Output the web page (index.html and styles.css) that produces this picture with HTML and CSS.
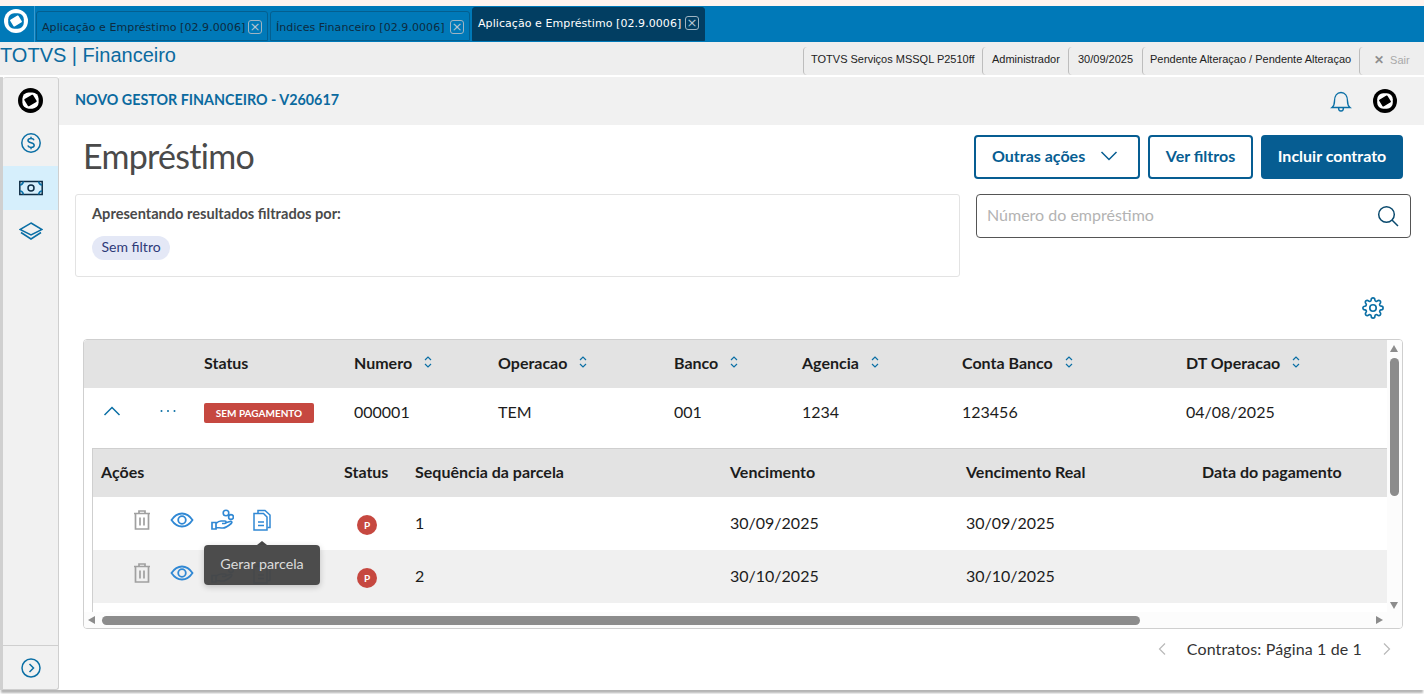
FILE: index.html
```html
<!DOCTYPE html>
<html lang="pt-BR">

<head>
    <meta charset="UTF-8">
    <title>TOTVS | Financeiro</title>
    <link rel="stylesheet" href="styles.css">
</head>

<body>
    <svg class="defs" width="0" height="0">
        <symbol id="totvs" viewBox="0 0 24 24">
            <circle cx="12" cy="12" r="12" fill="currentColor"></circle>
            <rect x="4.200" y="4.200" width="15.600" height="15.600" rx="6" fill="var(--logo-in)"></rect>
            <path d="M6.800 11.300 13.800 7.200l3.400 5.500-7 4.100z" fill="currentColor" stroke="currentColor" stroke-width="1.500" stroke-linejoin="round"></path>
        </symbol>
        <symbol id="sort" viewBox="0 0 10 16">
            <path d="M2 6 5 3l3 3M2 10l3 3 3-3" fill="none" stroke="currentColor" stroke-width="1.200"></path>
        </symbol>
        <symbol id="trash" viewBox="0 0 24 24">
            <path d="M4 5.500h16M9 5.500V3h6v2.500M5.500 5.500V21h13V5.500M10 9.500v8M14 9.500v8" fill="none" stroke="currentColor" stroke-width="1.700"></path>
        </symbol>
        <symbol id="eye" viewBox="0 0 24 24">
            <path d="M1.500 12C4.500 7.500 8 5.500 12 5.500s7.500 2 10.500 6.500c-3 4.500-6.500 6.500-10.500 6.500S4.500 16.500 1.500 12z" fill="none" stroke="currentColor" stroke-width="1.800"></path>
            <circle cx="12" cy="12" r="3.800" fill="none" stroke="currentColor" stroke-width="1.800"></circle>
        </symbol>
        <symbol id="hand" viewBox="0 0 24 24">
            <circle cx="16" cy="5" r="2.800" fill="none" stroke="currentColor" stroke-width="1.600"></circle>
            <circle cx="21" cy="9" r="2.400" fill="none" stroke="currentColor" stroke-width="1.600"></circle>
            <path d="M2 14.500h4v6.500H2zM6 15.500c2-2 3.500-2.500 5-2.500h4c1.500 0 1.500 2.500 0 2.500h-3M15 15l5-1.500c1.800-.4 2.500 1 1.200 2-3 2.500-5.500 4.500-8.200 4.500-2.500 0-5-.5-7-.5" fill="none" stroke="currentColor" stroke-width="1.700"></path>
        </symbol>
        <symbol id="doc" viewBox="0 0 24 24">
            <path d="M8 5.500V2.500h7l5 4.500v12.500h-2.500" fill="none" stroke="currentColor" stroke-width="1.500"></path>
            <path d="M4 5.500h9.500l3.500 3.500v13H4zM8 14h6M8 17.500h6" fill="none" stroke="currentColor" stroke-width="1.500"></path>
        </symbol>
    </svg>

    <div class="strip"></div>

    <div class="tabbar">
        <div class="tab-logo">
            <svg class="logo-white" width="24" height="24"><use href="#totvs"></use></svg>
        </div>
        <div class="tab tab-one"><span>Aplicação e Empréstimo [02.9.0006]</span><b class="tab-x">×</b></div>
        <div class="tab tab-two"><span>Índices Financeiro [02.9.0006]</span><b class="tab-x">×</b></div>
        <div class="tab tab-active"><span>Aplicação e Empréstimo [02.9.0006]</span><b class="tab-x">×</b></div>
    </div>

    <div class="infobar">
        <div class="brand">TOTVS | Financeiro</div>
        <div class="info-items">
            <div class="info info-env">TOTVS Serviços MSSQL P2510ff</div>
            <div class="info info-user">Administrador</div>
            <div class="info info-date">30/09/2025</div>
            <div class="info info-pend">Pendente Alteraçao / Pendente Alteraçao</div>
            <div class="info info-exit"><span class="exit-x">✕</span> Sair</div>
        </div>
    </div>

    <div class="main">
        <aside class="sidebar">
            <div class="side-logo">
                <svg class="logo-black" width="25" height="25"><use href="#totvs"></use></svg>
            </div>
            <div class="side-item side-up">
                <svg width="22" height="22" viewBox="0 0 22 22" fill="none" stroke="currentColor" stroke-width="1.500">
                    <circle cx="11" cy="11" r="9.200"></circle>
                    <path d="M14 8.200c-.4-1.200-1.500-1.700-3-1.700-1.800 0-3 .8-3 2.100 0 2.900 6.200 1.500 6.200 4.700 0 1.300-1.300 2.200-3.200 2.200-1.600 0-2.800-.7-3.200-1.900M11 4.800v1.700M11 15.500v1.700"></path>
                </svg>
            </div>
            <div class="side-item side-active">
                <svg width="24" height="16" viewBox="0 0 24 16" fill="none" stroke="#0e2c44" stroke-width="1.500">
                    <rect x=".8" y="1.500" width="22.400" height="13"></rect>
                    <circle cx="12" cy="8" r="3"></circle>
                    <path d="M1 5c2 0 3-1.500 3.500-3.500M23 5c-2 0-3-1.500-3.500-3.500M1 11c2 0 3 1.500 3.500 3.500M23 11c-2 0-3 1.500-3.500 3.500" stroke="#0b6fa5"></path>
                </svg>
            </div>
            <div class="side-item side-up">
                <svg width="24" height="20" viewBox="0 0 24 20" fill="none" stroke="currentColor" stroke-width="1.500">
                    <path d="M12 2 23 8.500 12 14 1 8.500z"></path>
                    <path d="M2 11.500 12 18l10-6.500"></path>
                </svg>
            </div>
            <div class="side-foot">
                <svg width="20" height="20" viewBox="0 0 20 20" fill="none" stroke="currentColor" stroke-width="1.500">
                    <circle cx="10" cy="10" r="9"></circle>
                    <path d="M8.500 6l4 4-4 4"></path>
                </svg>
            </div>
        </aside>

        <div class="content">
            <div class="app-head">
                <span class="app-name">NOVO GESTOR FINANCEIRO - V260617</span>
                <div class="app-icons">
                    <svg class="bell" width="22" height="24" viewBox="0 0 22 24" fill="none" stroke="currentColor" stroke-width="1.400">
                        <path d="M2 18.500c2-1.500 2.500-3 2.500-6.500 0-5 2.500-8.500 6.500-8.500s6.500 3.500 6.500 8.500c0 3.500.5 5 2.500 6.500zM8.500 18.500c0 2.200 1 3.500 2.500 3.500s2.500-1.300 2.500-3.500"></path>
                    </svg>
                    <svg class="logo-black" width="24" height="24"><use href="#totvs"></use></svg>
                </div>
            </div>

            <div class="page-head">
                <h1 class="page-title">Empréstimo</h1>
                <div class="page-actions">
                    <button class="btn btn-more">Outras ações
                        <svg width="18" height="10" viewBox="0 0 18 10" fill="none" stroke="currentColor" stroke-width="1.500"><path d="M1.500 1 9 8.500 16.500 1"></path></svg>
                    </button>
                    <button class="btn btn-filter">Ver filtros</button>
                    <button class="btn btn-primary">Incluir contrato</button>
                </div>
            </div>

            <div class="filter-row">
                <div class="filter-card">
                    <div class="filter-label">Apresentando resultados filtrados por:</div>
                    <span class="chip">Sem filtro</span>
                </div>
                <div class="search">
                    <span class="search-text">Número do empréstimo</span>
                    <svg width="22" height="22" viewBox="0 0 22 22" fill="none" stroke="currentColor" stroke-width="1.500">
                        <circle cx="9.500" cy="9.500" r="7.800"></circle>
                        <path d="M15 15l6 6"></path>
                    </svg>
                </div>
            </div>

            <div class="gear-row">
                <svg width="22" height="22" viewBox="0 0 24 24" fill="none" stroke="currentColor" stroke-width="1.800" stroke-linejoin="round">
                    <circle cx="12" cy="12" r="3.500"></circle>
                    <path d="M19.400 15a1.650 1.650 0 0 0 .33 1.820l.06.06a2 2 0 0 1 0 2.830 2 2 0 0 1-2.830 0l-.06-.06a1.650 1.650 0 0 0-1.820-.33 1.650 1.650 0 0 0-1 1.510V21a2 2 0 0 1-2 2 2 2 0 0 1-2-2v-.09A1.650 1.650 0 0 0 9 19.400a1.650 1.650 0 0 0-1.820.33l-.06.06a2 2 0 0 1-2.830 0 2 2 0 0 1 0-2.830l.06-.06a1.650 1.650 0 0 0 .33-1.820 1.650 1.650 0 0 0-1.510-1H3a2 2 0 0 1-2-2 2 2 0 0 1 2-2h.09A1.650 1.650 0 0 0 4.600 9a1.650 1.650 0 0 0-.33-1.820l-.06-.06a2 2 0 0 1 0-2.830 2 2 0 0 1 2.830 0l.06.06a1.650 1.650 0 0 0 1.820.33H9a1.650 1.650 0 0 0 1-1.510V3a2 2 0 0 1 2-2 2 2 0 0 1 2 2v.09a1.650 1.650 0 0 0 1 1.510 1.650 1.650 0 0 0 1.820-.33l.06-.06a2 2 0 0 1 2.830 0 2 2 0 0 1 0 2.830l-.06.06a1.650 1.650 0 0 0-.33 1.820V9a1.650 1.650 0 0 0 1.510 1H21a2 2 0 0 1 2 2 2 2 0 0 1-2 2h-.09a1.650 1.650 0 0 0-1.510 1z"></path>
                </svg>
            </div>

            <div class="table-frame">
                <div class="table-view">
                    <div class="grid-outer grid-head">
                        <div></div>
                        <div></div>
                        <div class="cell">Status</div>
                        <div class="cell">Numero <svg class="sort"><use href="#sort"></use></svg></div>
                        <div class="cell">Operacao <svg class="sort"><use href="#sort"></use></svg></div>
                        <div class="cell">Banco <svg class="sort"><use href="#sort"></use></svg></div>
                        <div class="cell">Agencia <svg class="sort"><use href="#sort"></use></svg></div>
                        <div class="cell">Conta Banco <svg class="sort"><use href="#sort"></use></svg></div>
                        <div class="cell">DT Operacao <svg class="sort"><use href="#sort"></use></svg></div>
                    </div>
                    <div class="grid-outer grid-row">
                        <div class="cell-icon">
                            <svg width="18" height="10" viewBox="0 0 18 10" fill="none" stroke="currentColor" stroke-width="1.500"><path d="M1.500 9 9 1.500 16.500 9"></path></svg>
                        </div>
                        <div class="cell-icon">
                            <svg width="18" height="4" viewBox="0 0 18 4" fill="currentColor">
                                <circle cx="2.500" cy="2" r="1"></circle>
                                <circle cx="9" cy="2" r="1"></circle>
                                <circle cx="15.500" cy="2" r="1"></circle>
                            </svg>
                        </div>
                        <div class="cell"><span class="tag">SEM PAGAMENTO</span></div>
                        <div class="cell">000001</div>
                        <div class="cell">TEM</div>
                        <div class="cell">001</div>
                        <div class="cell">1234</div>
                        <div class="cell">123456</div>
                        <div class="cell">04/08/2025</div>
                    </div>
                    <div class="sub-table">
                        <div class="grid-inner sub-head">
                            <div class="cell">Ações</div>
                            <div class="cell">Status</div>
                            <div class="cell">Sequência da parcela</div>
                            <div class="cell">Vencimento</div>
                            <div class="cell">Vencimento Real</div>
                            <div class="cell">Data do pagamento</div>
                        </div>
                        <div class="grid-inner sub-row">
                            <div class="actions">
                                <svg class="ico-gray"><use href="#trash"></use></svg>
                                <svg class="ico-blue"><use href="#eye"></use></svg>
                                <svg class="ico-blue"><use href="#hand"></use></svg>
                                <svg class="ico-blue"><use href="#doc"></use></svg>
                            </div>
                            <div class="cell"><span class="badge">P</span></div>
                            <div class="cell">1</div>
                            <div class="cell">30/09/2025</div>
                            <div class="cell">30/09/2025</div>
                            <div class="cell"></div>
                        </div>
                        <div class="grid-inner sub-row sub-odd">
                            <div class="actions">
                                <svg class="ico-gray"><use href="#trash"></use></svg>
                                <svg class="ico-blue"><use href="#eye"></use></svg>
                                <svg class="ico-blue"><use href="#hand"></use></svg>
                                <svg class="ico-blue"><use href="#doc"></use></svg>
                            </div>
                            <div class="cell"><span class="badge">P</span></div>
                            <div class="cell">2</div>
                            <div class="cell">30/10/2025</div>
                            <div class="cell">30/10/2025</div>
                            <div class="cell"></div>
                        </div>
                    </div>
                    <div class="tooltip">Gerar parcela</div>
                </div>
                <div class="vbar">
                    <span class="arrow-up"></span>
                    <span class="vthumb"></span>
                    <span class="arrow-down"></span>
                </div>
                <div class="hbar">
                    <span class="arrow-left"></span>
                    <span class="hthumb"></span>
                    <span class="arrow-right"></span>
                </div>
            </div>

            <div class="pager">
                <svg width="10" height="14" viewBox="0 0 10 14" fill="none" stroke="currentColor" stroke-width="1.200"><path d="M8 1.500 2.500 7 8 12.500"></path></svg>
                <span class="pager-text">Contratos: Página 1 de 1</span>
                <svg width="10" height="14" viewBox="0 0 10 14" fill="none" stroke="currentColor" stroke-width="1.200"><path d="M2 1.500 7.500 7 2 12.500"></path></svg>
            </div>
        </div>
    </div>
</body>

</html>
```

FILE: styles.css
```css
* {
    box-sizing: border-box;
}

html,
body {
    margin: 0;
    height: 694px;
    overflow: hidden;
}

body {
    font-family: 'Lato', 'Open Sans', sans-serif;
    font-size: 16px;
    color: #1c1c1c;
    background: #fff;
    display: flex;
    flex-direction: column;
}

.defs {
    position: absolute;
}

.logo-white {
    color: #fff;
    --logo-in: #0079b8;
}

.logo-black {
    color: #000;
    --logo-in: #fff;
}

/* top window bars */
.strip {
    height: 6px;
    background: #fff4ef;
}

.tabbar {
    height: 36px;
    background: #0079b8;
    display: flex;
    align-items: flex-end;
    font-family: 'DejaVu Sans', sans-serif;
    font-size: 11px;
    letter-spacing: 0.07px;
}

.tab-logo {
    width: 35px;
    height: 36px;
    display: flex;
    align-items: center;
    justify-content: center;
    padding-bottom: 6px;
    padding-right: 3px;
    border-right: 1px solid #3a9bd0;
}

.tab {
    height: 30px;
    margin-bottom: 1px;
    margin-left: 1px;
    border: 1px solid #045f8f;
    border-radius: 3px 3px 0 0;
    display: flex;
    align-items: center;
    justify-content: space-between;
    padding: 2px 5px 0;
    color: #0d2b40;
}

.tab-one {
    width: 232px;
}

.tab-two {
    width: 200px;
    margin-left: 2px;
}

.tab-active {
    width: 233px;
    height: 34px;
    margin-left: 2px;
    padding: 0 5px 2px 5px;
    background: #023e62;
    border-color: #023e62;
    color: #fff;
}

.tab-x {
    width: 14px;
    height: 14px;
    border: 1px solid #9fb4c2;
    border-radius: 3px;
    font-size: 13px;
    line-height: 11px;
    text-align: center;
    font-weight: normal;
    color: #b5c6d1;
}

.infobar {
    height: 33px;
    background: #eeeeee;
    display: flex;
    justify-content: space-between;
    font-family: 'Liberation Sans', sans-serif;
}

.brand {
    font-size: 20px;
    line-height: 27px;
    color: #0b6a9f;
}

.info-items {
    display: flex;
    align-items: flex-end;
    font-size: 11px;
    color: #222;
}

.info {
    height: 28px;
    padding-top: 6px;
    padding-left: 7px;
    border-left: 1px solid #bdbdbd;
    border-radius: 4px 0 0 4px;
    white-space: nowrap;
}

.info-env {
    width: 179px;
}

.info-user {
    width: 86px;
    padding-left: 9px;
}

.info-date {
    width: 74px;
    padding-left: 9px;
}

.info-pend {
    width: 217px;
}

.info-exit {
    width: 65px;
    padding-left: 14px;
    color: #a9a9a9;
}

.exit-x {
    color: #8f8f8f;
    font-size: 12px;
    font-weight: bold;
    margin-right: 3px;
}

/* main area */
.main {
    height: 613px;
    margin-top: 2px;
    display: flex;
    box-shadow: 0 4px 2px -1px #b5b5b5;
    border-left: 3px solid #d0d0d0;
}

.sidebar {
    width: 56px;
    background: #f1f1f1;
    border: 1px solid #cfcfcf;
    border-top-color: #dcdcdc;
    border-left: 0;
    border-radius: 3px 3px 3px 0;
    display: flex;
    flex-direction: column;
    color: #0b6fa5;
    flex: none;
}

.side-logo {
    height: 44px;
    display: flex;
    align-items: center;
    justify-content: center;
}

.side-item {
    height: 44px;
    display: flex;
    align-items: center;
    justify-content: center;
}

.side-up {
    padding-bottom: 3px;
}

.side-active {
    background: #d6effc;
}

.side-foot {
    margin-top: auto;
    height: 44px;
    border-top: 1px solid #cfcfcf;
    display: flex;
    align-items: center;
    justify-content: center;
}

.content {
    flex: 1;
    background: #fff;
}

.app-head {
    height: 48px;
    background: #f1f1f1;
    padding: 0 27px 0 16px;
    display: flex;
    align-items: center;
    justify-content: space-between;
}

.app-name {
    font-size: 14.300px;
    font-weight: 700;
    color: #0b6a9f;
    padding-bottom: 3px;
}

.app-icons {
    display: flex;
    align-items: center;
    gap: 21px;
    color: #0b6fa5;
}

.page-head {
    height: 54px;
    padding: 10px 21px 0 24px;
    display: flex;
    justify-content: space-between;
}

.page-title {
    margin: 0;
    font-size: 34px;
    line-height: 42px;
    font-weight: 400;
    letter-spacing: -0.7px;
    color: #4a4a4a;
}

.page-actions {
    display: flex;
    gap: 8px;
}

.btn {
    height: 44px;
    border: 2px solid #065d92;
    border-radius: 4px;
    background: #fff;
    color: #065d92;
    font-family: inherit;
    font-size: 16px;
    font-weight: 700;
    padding: 0 0 3px;
}

.btn-more {
    width: 166px;
    display: flex;
    align-items: center;
    padding-left: 16px;
    gap: 15px;
}

.btn-filter {
    width: 105px;
}

.btn-primary {
    width: 142px;
    background: #065d92;
    color: #fff;
}

.filter-row {
    margin-top: 15px;
    padding: 0 13px 0 16px;
    display: flex;
    justify-content: space-between;
    align-items: flex-start;
}

.filter-card {
    width: 885px;
    height: 83px;
    border: 1px solid #e3e3e3;
    border-radius: 3px;
    padding: 10px 16px;
}

.filter-label {
    font-size: 14.600px;
    font-weight: 700;
    color: #4a4a4a;
    line-height: 18px;
}

.chip {
    display: inline-block;
    margin-top: 13px;
    height: 24px;
    padding: 0 9.500px;
    border-radius: 12px;
    background: #e4e8f6;
    color: #2e3a78;
    font-size: 14px;
    line-height: 22px;
}

.search {
    width: 435px;
    height: 44px;
    border: 1px solid #555;
    border-radius: 4px;
    padding: 0 11px 0 10px;
    display: flex;
    align-items: center;
    justify-content: space-between;
    color: #0a4a6e;
}

.search-text {
    color: #b3b3b3;
    padding-bottom: 4px;
}

.gear-row {
    height: 62px;
    padding: 20px 40px 0 0;
    display: flex;
    justify-content: flex-end;
    color: #0b6fa5;
}

/* table */
.table-frame {
    width: 1320px;
    height: 290px;
    margin-left: 24px;
    border: 1px solid #cfcfcf;
    border-radius: 4px;
    display: grid;
    grid-template-columns: 1303px 15px;
    grid-template-rows: 272px 16px;
    overflow: hidden;
    background: #fcfcfc;
}

.table-view {
    position: relative;
    overflow: hidden;
    background: #fff;
}

.grid-outer {
    display: grid;
    grid-template-columns: 56px 56px 150px 144px 176px 128px 160px 224px 209px;
    align-items: center;
}

.grid-head {
    height: 48px;
    padding-bottom: 4px;
    background: #e3e3e3;
    font-weight: 700;
}

.grid-row {
    height: 48px;
    padding-bottom: 2px;
    margin-bottom: 12px;
}

.cell {
    padding-left: 8px;
    white-space: nowrap;
    display: flex;
    align-items: center;
}

.cell-icon {
    display: flex;
    justify-content: center;
    color: #0b6fa5;
}

.sort {
    width: 10px;
    height: 16px;
    margin-left: 11px;
    color: #0b6fa5;
}

.tag {
    width: 110px;
    height: 20px;
    margin-top: 4px;
    border-radius: 2px;
    background: #c64840;
    color: #fff;
    font-size: 10px;
    font-weight: 700;
    line-height: 20px;
    text-align: center;
}

.sub-table {
    margin-left: 8px;
    height: 164px;
    border-left: 1px solid #cfcfcf;
    border-top: 1px solid #cfcfcf;
}

.grid-inner {
    display: grid;
    grid-template-columns: 243px 71px 315px 236px 236px 193px;
    align-items: center;
}

.sub-head {
    height: 48px;
    padding-bottom: 4px;
    background: #e3e3e3;
    font-weight: 700;
}

.sub-row {
    height: 53px;
}

.sub-row .cell {
    padding-bottom: 2px;
}

.sub-odd {
    background: #f0f0f0;
}

.actions {
    padding: 0 0 7px 37px;
    display: flex;
    gap: 16px;
}

.actions svg {
    width: 24px;
    height: 24px;
}

.ico-gray {
    color: #a0a0a0;
}

.ico-blue {
    color: #3088d4;
}

.badge {
    width: 20px;
    height: 20px;
    margin: 5px 0 0 13px;
    border-radius: 50%;
    background: #c64840;
    color: #fff;
    font-size: 10px;
    font-weight: 700;
    line-height: 20px;
    text-align: center;
}

.tooltip {
    position: absolute;
    left: 120px;
    top: 205px;
    width: 116px;
    height: 40px;
    border-radius: 4px;
    background: rgba(70, 70, 70, 0.97);
    box-shadow: 0 2px 6px rgba(0, 0, 0, 0.2);
    color: #dcdcdc;
    font-size: 14.300px;
    line-height: 37px;
    text-align: center;
}

.tooltip::before {
    content: "";
    position: absolute;
    left: 53px;
    top: -4px;
    border-left: 5px solid transparent;
    border-right: 5px solid transparent;
    border-bottom: 4px solid #464646;
}

.vbar {
    position: relative;
    background: #fcfcfc;
    grid-row: 1 / 3;
    grid-column: 2;
}

.vthumb {
    position: absolute;
    left: 3px;
    top: 18px;
    width: 9px;
    height: 138px;
    border-radius: 5px;
    background: #8c8c8c;
}

.arrow-up,
.arrow-down {
    position: absolute;
    left: 3px;
    border-left: 4.500px solid transparent;
    border-right: 4.500px solid transparent;
}

.arrow-up {
    top: 5px;
    border-bottom: 7px solid #8c8c8c;
}

.arrow-down {
    top: 262px;
    border-top: 7px solid #8c8c8c;
}

.hbar {
    position: relative;
    background: #fcfcfc;
}

.hthumb {
    position: absolute;
    left: 18px;
    top: 4px;
    width: 1038px;
    height: 9px;
    border-radius: 5px;
    background: #8c8c8c;
}

.arrow-left,
.arrow-right {
    position: absolute;
    top: 4px;
    border-top: 4.500px solid transparent;
    border-bottom: 4.500px solid transparent;
}

.arrow-left {
    left: 4px;
    border-right: 7px solid #8c8c8c;
}

.arrow-right {
    left: 1292px;
    border-left: 7px solid #8c8c8c;
}

.pager {
    margin-top: 10px;
    padding-right: 32px;
    display: flex;
    align-items: center;
    justify-content: flex-end;
    color: #b9b9b9;
}

.pager-text {
    margin: 0 20px;
    letter-spacing: 0.13px;
    color: #333;
}
```
